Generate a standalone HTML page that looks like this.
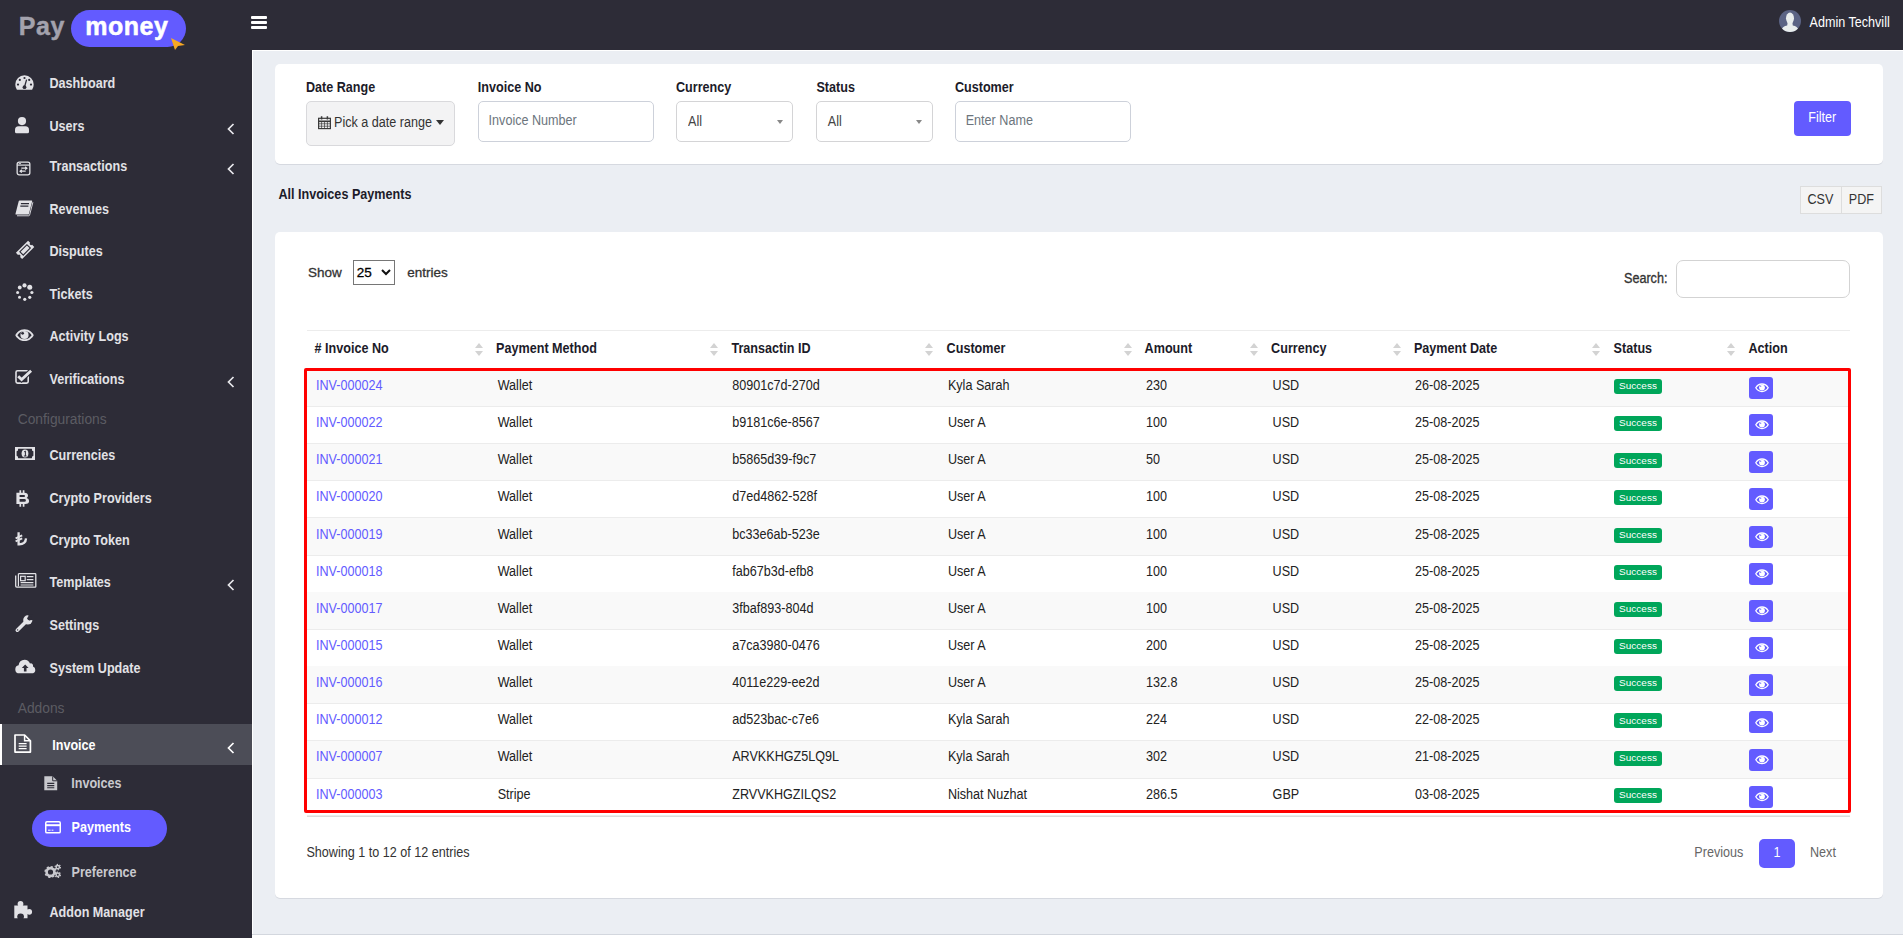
<!DOCTYPE html>
<html><head><meta charset="utf-8"><title>Payments</title>
<style>
html,body{margin:0;padding:0;}
body{width:1903px;height:938px;overflow:hidden;position:relative;background:#fff;font-family:"Liberation Sans",sans-serif;}
.t{position:absolute;white-space:nowrap;line-height:20px;}
.r{position:absolute;}
</style></head><body>
<div class="r" style="left:0px;top:0px;width:1903px;height:50px;background:#2d2c37"></div>
<div class="r" style="left:0px;top:50px;width:252px;height:888px;background:#2d2c37"></div>
<div class="r" style="left:252px;top:50px;width:1651px;height:885px;background:#ebeef3;border-left:1px solid #fff;border-top:1px solid #fff;box-sizing:border-box"></div>
<div class="r" style="left:252px;top:934px;width:1651px;height:1px;background:#d3d7de"></div>
<div class="r" style="left:252px;top:935px;width:1651px;height:3px;background:#fff"></div>
<div class="t" style="left:18.80px;top:15.80px;font-size:25px;font-weight:700;color:#a3a2ad;letter-spacing:0.5px;-webkit-text-stroke:0.4px #a3a2ad">Pay</div>
<div class="r" style="left:71px;top:10px;width:115px;height:37px;background:#635bff;border-radius:18.5px"></div>
<div class="t" style="left:85.30px;top:16.20px;font-size:25px;font-weight:700;color:#fff;letter-spacing:0.5px;-webkit-text-stroke:0.5px #fff">money</div>
<svg class="r" style="left:170px;top:37px;overflow:visible" width="16" height="13" viewBox="0 0 16 13"><path d="M1 1 L15 8 L8 9 L5 13 Z" fill="#f7a823"/></svg>
<div class="r" style="left:251px;top:16px;width:16px;height:3px;background:#fff;border-radius:1px"></div>
<div class="r" style="left:251px;top:21px;width:16px;height:3px;background:#fff;border-radius:1px"></div>
<div class="r" style="left:251px;top:26px;width:16px;height:3px;background:#fff;border-radius:1px"></div>
<svg class="r" style="left:1779px;top:10px;overflow:visible" width="22" height="22" viewBox="0 0 22 22"><circle cx="11" cy="11" r="11" fill="#5b6384"/><clipPath id="cc"><circle cx="11" cy="11" r="11"/></clipPath><g clip-path="url(#cc)" fill="#e9eded"><ellipse cx="11" cy="8.2" rx="4" ry="5.6"/><path d="M8.6 12.5 L13.4 12.5 L13.8 15.6 Q18.5 16.5 19.5 20 L19.5 23 L2.5 23 L2.5 20 Q3.5 16.5 8.2 15.6 Z"/></g></svg>
<div class="t" style="left:1809.50px;top:12.70px;font-size:12.6px;font-weight:400;color:#fff;transform:scaleY(1.1);transform-origin:0 14.00px;">Admin Techvill</div>
<div class="t" style="left:49.50px;top:74.00px;font-size:12.6px;font-weight:700;color:#e2e2e6;transform:scaleY(1.1);transform-origin:0 14.00px;">Dashboard</div>
<svg class="r" style="left:15px;top:74.5px;overflow:visible" width="19" height="15" viewBox="0 0 19 15"><path d="M9.5 0.3 A9.2 9.2 0 0 0 0.3 9.5 Q0.3 12.6 1.9 14.8 L17.1 14.8 Q18.7 12.6 18.7 9.5 A9.2 9.2 0 0 0 9.5 0.3 Z" fill="#e2e2e6"/>
<g fill="#2d2c37"><circle cx="9.5" cy="3" r="1.1"/><circle cx="4.8" cy="4.9" r="1.1"/><circle cx="14.2" cy="4.9" r="1.1"/><circle cx="3" cy="9.6" r="1.1"/><circle cx="16" cy="9.6" r="1.1"/><circle cx="9.5" cy="12.2" r="1.9"/></g>
<path d="M9.5 12 L11.6 4.6" stroke="#2d2c37" stroke-width="1.3"/></svg>
<div class="t" style="left:49.50px;top:117.00px;font-size:12.6px;font-weight:700;color:#e2e2e6;transform:scaleY(1.1);transform-origin:0 14.00px;">Users</div>
<svg class="r" style="left:15px;top:116.5px;overflow:visible" width="14" height="16.3" viewBox="0 0 14 16.3"><circle cx="7" cy="4.1" r="4.1" fill="#e2e2e6"/>
<path d="M3.6 9.3 L10.4 9.3 Q14 9.3 14 12.8 L14 14.8 Q14 16.3 12.5 16.3 L1.5 16.3 Q0 16.3 0 14.8 L0 12.8 Q0 9.3 3.6 9.3 Z" fill="#e2e2e6"/></svg>
<svg class="r" style="left:226px;top:123px;overflow:visible" width="10" height="12" viewBox="0 0 10 12"><path d="M7.5 1 L2.5 6 L7.5 11" stroke="#e8e8ec" stroke-width="1.7" fill="none"/></svg>
<div class="t" style="left:49.50px;top:157.00px;font-size:12.6px;font-weight:700;color:#e2e2e6;transform:scaleY(1.1);transform-origin:0 14.00px;">Transactions</div>
<svg class="r" style="left:15.5px;top:160.7px;overflow:visible" width="15" height="15" viewBox="0 0 15 15"><rect x="1.15" y="1.15" width="12.7" height="12.7" rx="2" fill="none" stroke="#e2e2e6" stroke-width="1.3"/>
<path d="M1.15 4.1 H13.85" stroke="#e2e2e6" stroke-width="1.2"/><path d="M2.8 2.6 H5" stroke="#e2e2e6" stroke-width="0.9"/>
<path d="M5.3 7.2 H10.8 M9.2 5.8 L10.9 7.2 L9.2 8.6" stroke="#e2e2e6" stroke-width="1.2" fill="none"/>
<path d="M9.7 10.2 H4.2 M5.8 8.8 L4.1 10.2 L5.8 11.6" stroke="#e2e2e6" stroke-width="1.2" fill="none"/></svg>
<svg class="r" style="left:226px;top:163px;overflow:visible" width="10" height="12" viewBox="0 0 10 12"><path d="M7.5 1 L2.5 6 L7.5 11" stroke="#e8e8ec" stroke-width="1.7" fill="none"/></svg>
<div class="t" style="left:49.50px;top:200.00px;font-size:12.6px;font-weight:700;color:#e2e2e6;transform:scaleY(1.1);transform-origin:0 14.00px;">Revenues</div>
<svg class="r" style="left:14.8px;top:199.5px;overflow:visible" width="18.5" height="16.2" viewBox="0 0 18.5 16.2"><path d="M4.6 0.4 L16.6 0.4 Q17.4 0.4 17.2 1.3 L13.9 13.9 Q13.7 14.6 13 14.6 L1.2 14.6 Q0.3 14.6 0.5 13.7 L3.7 1.2 Q3.9 0.4 4.6 0.4 Z" fill="#e2e2e6"/>
<path d="M17.9 2.2 L14.6 15.1 Q14.4 15.8 13.7 15.8 L2 15.8" stroke="#e2e2e6" stroke-width="0.9" fill="none"/>
<path d="M5.9 3.6 H14 M5.3 6.2 H13.4" stroke="#2d2c37" stroke-width="1.3"/></svg>
<div class="t" style="left:49.50px;top:242.00px;font-size:12.6px;font-weight:700;color:#e2e2e6;transform:scaleY(1.1);transform-origin:0 14.00px;">Disputes</div>
<svg class="r" style="left:15.5px;top:240.5px;overflow:visible" width="18.2" height="17.8" viewBox="0 0 18.2 17.8"><g transform="translate(9.1 8.9) rotate(-45)"><path d="M-8.6 -4.4 H8.6 V-1.4 A1.4 1.4 0 0 0 8.6 1.4 V4.4 H-8.6 V1.4 A1.4 1.4 0 0 0 -8.6 -1.4 Z" fill="#e2e2e6"/>
<rect x="-5" y="-2.4" width="10" height="4.8" fill="none" stroke="#2d2c37" stroke-width="1.1"/></g></svg>
<div class="t" style="left:49.50px;top:285.00px;font-size:12.6px;font-weight:700;color:#e2e2e6;transform:scaleY(1.1);transform-origin:0 14.00px;">Tickets</div>
<svg class="r" style="left:15.8px;top:283px;overflow:visible" width="18" height="18" viewBox="0 0 18 18"><g fill="#e2e2e6"><circle cx="8.5" cy="2.4" r="2.1"/><circle cx="13.75" cy="4.3" r="2.5"/><circle cx="15.9" cy="9.5" r="1.6"/><circle cx="13.75" cy="14.3" r="1.6"/><circle cx="8.75" cy="16.3" r="1.6"/><circle cx="3.5" cy="14.3" r="1.5"/><circle cx="1.6" cy="9.5" r="1.5"/><circle cx="3.75" cy="4.5" r="1.9"/></g></svg>
<div class="t" style="left:49.50px;top:327.00px;font-size:12.6px;font-weight:700;color:#e2e2e6;transform:scaleY(1.1);transform-origin:0 14.00px;">Activity Logs</div>
<svg class="r" style="left:15.2px;top:329.3px;overflow:visible" width="19" height="12.4" viewBox="0 0 19 12.4"><path d="M9.5 0.3 C4.6 0.3 1.4 3.9 0.3 6.2 C1.4 8.5 4.6 12.1 9.5 12.1 C14.4 12.1 17.6 8.5 18.7 6.2 C17.6 3.9 14.4 0.3 9.5 0.3 Z" fill="#e2e2e6"/>
<path d="M9.5 2.1 C5.9 2.1 3.5 4.6 2.4 6.2 C3.5 7.8 5.9 10.3 9.5 10.3 C13.1 10.3 15.5 7.8 16.6 6.2 C15.5 4.6 13.1 2.1 9.5 2.1 Z" fill="#2d2c37"/>
<circle cx="9.5" cy="6" r="4.1" fill="#e2e2e6"/><circle cx="7.6" cy="4.3" r="1.4" fill="#2d2c37"/></svg>
<div class="t" style="left:49.50px;top:370.00px;font-size:12.6px;font-weight:700;color:#e2e2e6;transform:scaleY(1.1);transform-origin:0 14.00px;">Verifications</div>
<svg class="r" style="left:15.2px;top:369.3px;overflow:visible" width="18" height="15" viewBox="0 0 18 15"><rect x="1.0" y="1.7" width="12.2" height="12.4" rx="1.6" fill="none" stroke="#e2e2e6" stroke-width="1.6"/>
<path d="M3.2 7.2 L6.6 10.6 L16.1 1.8" stroke="#2d2c37" stroke-width="4.8" fill="none"/>
<path d="M3.2 7.2 L6.6 10.6 L16.1 1.8" stroke="#e2e2e6" stroke-width="2.8" fill="none"/></svg>
<svg class="r" style="left:226px;top:376px;overflow:visible" width="10" height="12" viewBox="0 0 10 12"><path d="M7.5 1 L2.5 6 L7.5 11" stroke="#e8e8ec" stroke-width="1.7" fill="none"/></svg>
<div class="t" style="left:49.50px;top:446.00px;font-size:12.6px;font-weight:700;color:#e2e2e6;transform:scaleY(1.1);transform-origin:0 14.00px;">Currencies</div>
<svg class="r" style="left:15.3px;top:447.2px;overflow:visible" width="20" height="13" viewBox="0 0 20 13"><rect x="0" y="0" width="20" height="13" fill="#e2e2e6"/>
<path d="M3.2 1.7 H16.8 Q16.8 4.3 18.4 4.3 V8.7 Q16.8 8.7 16.8 11.3 H3.2 Q3.2 8.7 1.6 8.7 V4.3 Q3.2 4.3 3.2 1.7 Z" fill="#2d2c37"/>
<ellipse cx="10" cy="6.5" rx="3.4" ry="3.9" fill="#e2e2e6"/><path d="M9.1 4.9 L10.4 4.1 V9 M8.9 9 H11.6" stroke="#2d2c37" stroke-width="1" fill="none"/></svg>
<div class="t" style="left:49.50px;top:489.00px;font-size:12.6px;font-weight:700;color:#e2e2e6;transform:scaleY(1.1);transform-origin:0 14.00px;">Crypto Providers</div>
<svg class="r" style="left:15.6px;top:489.5px;overflow:visible" width="13.5" height="17" viewBox="0 0 13.5 17"><path fill-rule="evenodd" d="M0.4 2.8 H8.4 Q12 2.8 12 5.7 Q12 7.3 10.6 8 Q13.1 8.7 13.1 11 Q13.1 14 9.3 14 H0.4 Z M3.6 5.1 H7.9 Q9.1 5.1 9.1 6 Q9.1 6.9 7.9 6.9 H3.6 Z M3.6 9.1 H8.4 Q9.9 9.1 9.9 10.4 Q9.9 11.7 8.4 11.7 H3.6 Z" fill="#e2e2e6"/>
<path d="M4.3 0.2 V3 M7.6 0.2 V3 M4.3 13.8 V16.8 M7.6 13.8 V16.8" stroke="#e2e2e6" stroke-width="1.7"/></svg>
<div class="t" style="left:49.50px;top:531.00px;font-size:12.6px;font-weight:700;color:#e2e2e6;transform:scaleY(1.1);transform-origin:0 14.00px;">Crypto Token</div>
<svg class="r" style="left:15px;top:532.3px;overflow:visible" width="12.5" height="13.6" viewBox="0 0 12.5 13.6"><path d="M3.6 0.3 V12.3 Q10.8 12.6 11 6.4" stroke="#e2e2e6" stroke-width="2.3" fill="none"/>
<path d="M0.6 6.4 L7.2 3.4 M0.6 9.3 L7.2 6.3" stroke="#e2e2e6" stroke-width="1.9"/></svg>
<div class="t" style="left:49.50px;top:573.00px;font-size:12.6px;font-weight:700;color:#e2e2e6;transform:scaleY(1.1);transform-origin:0 14.00px;">Templates</div>
<svg class="r" style="left:15.2px;top:573.4px;overflow:visible" width="21.5" height="14.8" viewBox="0 0 21.5 14.8"><path d="M3.4 0.7 H20.1 Q20.8 0.7 20.8 1.4 V13.4 Q20.8 14.1 20.1 14.1 H1.7 Q0.7 14.1 0.7 13.1 V2.6" stroke="#e2e2e6" stroke-width="1.3" fill="none"/>
<path d="M3.4 0.7 V13.3" stroke="#e2e2e6" stroke-width="1.2"/>
<rect x="5.6" y="3.3" width="4.6" height="4.4" fill="none" stroke="#e2e2e6" stroke-width="1.2"/>
<path d="M11.8 3.7 H18.4 M11.8 6.6 H18.4 M5.6 9.6 H18.4 M5.6 12 H18.4" stroke="#e2e2e6" stroke-width="1.2"/></svg>
<svg class="r" style="left:226px;top:579px;overflow:visible" width="10" height="12" viewBox="0 0 10 12"><path d="M7.5 1 L2.5 6 L7.5 11" stroke="#e8e8ec" stroke-width="1.7" fill="none"/></svg>
<div class="t" style="left:49.50px;top:616.00px;font-size:12.6px;font-weight:700;color:#e2e2e6;transform:scaleY(1.1);transform-origin:0 14.00px;">Settings</div>
<svg class="r" style="left:15.2px;top:615.1px;overflow:visible" width="18" height="17.5" viewBox="0 0 18 17.5"><path d="M2.3 15.2 L10.6 6.9" stroke="#e2e2e6" stroke-width="3.6" stroke-linecap="round"/>
<circle cx="12.8" cy="4.9" r="4.6" fill="#e2e2e6"/><path d="M13.5 0 L18 -0.5 L18 5 L14.2 5.2 Q12.6 3.2 13.5 0 Z" fill="#2d2c37"/>
<circle cx="14.4" cy="3.3" r="2.1" fill="#2d2c37"/><circle cx="2.6" cy="14.9" r="0.7" fill="#2d2c37"/></svg>
<div class="t" style="left:49.50px;top:659.00px;font-size:12.6px;font-weight:700;color:#e2e2e6;transform:scaleY(1.1);transform-origin:0 14.00px;">System Update</div>
<svg class="r" style="left:15.2px;top:658.6px;overflow:visible" width="20.5" height="14.5" viewBox="0 0 20.5 14.5"><path d="M4.6 14.3 Q0.3 14.3 0.3 10.4 Q0.3 6.9 3.6 6.3 Q4.2 1 9.6 0.7 Q13.6 0.7 15 4.5 Q16.4 3.9 17.4 5 Q18.3 5.9 18 7.4 Q20.3 8.3 20.3 10.9 Q20.3 14.3 16.4 14.3 Z" fill="#e2e2e6"/>
<path d="M10.2 5.6 L6.8 9 H8.9 V12.4 H11.5 V9 H13.6 Z" fill="#2d2c37"/></svg>
<div class="t" style="left:49.50px;top:903.00px;font-size:12.6px;font-weight:700;color:#e2e2e6;transform:scaleY(1.1);transform-origin:0 14.00px;">Addon Manager</div>
<svg class="r" style="left:14.3px;top:900.8px;overflow:visible" width="19" height="17.5" viewBox="0 0 19 17.5"><path d="M0.3 4.6 H4.3 Q3.6 3.9 3.6 2.9 A2.9 2.9 0 0 1 9.4 2.9 Q9.4 3.9 8.7 4.6 H13.5 V8.6 Q14.2 7.9 15.2 7.9 A2.9 2.9 0 0 1 15.2 13.7 Q14.2 13.7 13.5 13 V17.3 H9.4 Q10 16.7 10 15.8 A3.4 3.4 0 0 0 3.2 15.8 Q3.2 16.7 3.8 17.3 H0.3 Z" fill="#e2e2e6"/></svg>
<div class="t" style="left:17.70px;top:409.50px;font-size:13.8px;font-weight:400;color:#5c5c63;">Configurations</div>
<div class="t" style="left:17.70px;top:698.50px;font-size:13.8px;font-weight:400;color:#5c5c63;">Addons</div>
<div class="r" style="left:0px;top:724px;width:252px;height:41px;background:#4c4d57"></div>
<div class="r" style="left:0px;top:724px;width:2px;height:41px;background:#fff"></div>
<div class="t" style="left:52.20px;top:736.00px;font-size:12.6px;font-weight:700;color:#fff;transform:scaleY(1.1);transform-origin:0 14.00px;">Invoice</div>
<svg class="r" style="left:226px;top:742px;overflow:visible" width="10" height="12" viewBox="0 0 10 12"><path d="M7.5 1 L2.5 6 L7.5 11" stroke="#ffffff" stroke-width="1.7" fill="none"/></svg>
<div class="t" style="left:71.20px;top:774.00px;font-size:12.6px;font-weight:700;color:#c9c9ce;transform:scaleY(1.1);transform-origin:0 14.00px;">Invoices</div>
<div class="r" style="left:32px;top:810px;width:135px;height:37px;background:#635bff;border-radius:18.5px"></div>
<div class="t" style="left:71.50px;top:818.00px;font-size:12.6px;font-weight:700;color:#fff;transform:scaleY(1.1);transform-origin:0 14.00px;">Payments</div>
<div class="t" style="left:71.50px;top:862.50px;font-size:12.6px;font-weight:700;color:#c9c9ce;transform:scaleY(1.1);transform-origin:0 14.00px;">Preference</div>
<svg class="r" style="left:14.3px;top:734.2px;overflow:visible" width="17.5" height="19" viewBox="0 0 17.5 19"><path d="M1 1 H10.6 L16.4 6.8 V17.9 Q16.4 18.1 16.2 18.1 H1.2 Q1 18.1 1 17.9 Z" stroke="#fff" stroke-width="1.7" fill="none" stroke-linejoin="round"/>
<path d="M10.6 1 V6.8 H16.4" stroke="#fff" stroke-width="1.5" fill="none"/>
<path d="M4.7 9.6 H12.6 M4.7 12.1 H12.6 M4.7 14.6 H12.6" stroke="#fff" stroke-width="1.4"/></svg>
<svg class="r" style="left:44.3px;top:775.8px;overflow:visible" width="13.5" height="14.5" viewBox="0 0 13.5 14.5"><path d="M0.3 0.3 H8.7 L13.2 4.8 V14.2 H0.3 Z" fill="#c9c9ce"/>
<path d="M8.7 0.3 V4.8 H13.2" stroke="#2d2c37" stroke-width="1" fill="none"/>
<path d="M3.2 7.4 H10.3 M3.2 9.6 H10.3 M3.2 11.8 H10.3" stroke="#2d2c37" stroke-width="1.1"/></svg>
<svg class="r" style="left:44.8px;top:820.7px;overflow:visible" width="16" height="12.6" viewBox="0 0 16 12.6"><rect x="0.75" y="0.75" width="14.5" height="11.1" rx="1.2" fill="none" stroke="#fff" stroke-width="1.5"/>
<path d="M0.75 4.2 H15.25" stroke="#fff" stroke-width="2"/>
<path d="M3 9.2 H5.6 M6.6 9.2 H8.4" stroke="#fff" stroke-width="1"/></svg>
<svg class="r" style="left:44.8px;top:864.4px;overflow:visible" width="16" height="13.8" viewBox="0 0 16 13.8"><g fill="none" stroke="#c9c9ce"><circle cx="5.5" cy="8" r="3.9" stroke-width="2.6"/><circle cx="5.5" cy="8" r="5.3" stroke-width="1.6" stroke-dasharray="2.2 1.9"/>
<circle cx="12.8" cy="3.1" r="1.7" stroke-width="1.5"/><circle cx="12.8" cy="3.1" r="2.7" stroke-width="1.1" stroke-dasharray="1.4 1.4"/>
<circle cx="12.8" cy="10.8" r="1.7" stroke-width="1.5"/><circle cx="12.8" cy="10.8" r="2.7" stroke-width="1.1" stroke-dasharray="1.4 1.4"/></g></svg>
<div class="r" style="left:275px;top:64px;width:1608px;height:100px;background:#fff;border-radius:5px;box-shadow:0 1px 0 #d6d9e0"></div>
<div class="t" style="left:305.90px;top:78.00px;font-size:12.6px;font-weight:700;color:#1c1b29;transform:scaleY(1.1);transform-origin:0 14.00px;">Date Range</div>
<div class="t" style="left:477.80px;top:78.00px;font-size:12.6px;font-weight:700;color:#1c1b29;transform:scaleY(1.1);transform-origin:0 14.00px;">Invoice No</div>
<div class="t" style="left:676.00px;top:78.00px;font-size:12.6px;font-weight:700;color:#1c1b29;transform:scaleY(1.1);transform-origin:0 14.00px;">Currency</div>
<div class="t" style="left:816.40px;top:78.00px;font-size:12.6px;font-weight:700;color:#1c1b29;transform:scaleY(1.1);transform-origin:0 14.00px;">Status</div>
<div class="t" style="left:954.90px;top:78.00px;font-size:12.6px;font-weight:700;color:#1c1b29;transform:scaleY(1.1);transform-origin:0 14.00px;">Customer</div>
<div class="r" style="left:306px;top:101px;width:149px;height:45px;background:#f3f3f4;border:1px solid #d9d9dc;border-radius:5px;box-sizing:border-box"></div>
<div class="t" style="left:334.00px;top:112.80px;font-size:12.6px;font-weight:400;color:#333;transform:scaleY(1.1);transform-origin:0 14.00px;">Pick a date range</div>
<svg class="r" style="left:318.3px;top:115.8px;overflow:visible" width="13" height="13.2" viewBox="0 0 13 13.2"><g fill="none" stroke="#3a3a3a"><rect x="0.6" y="2.3" width="11.8" height="10.3" stroke-width="1.2"/><path d="M0.6 5.3 H12.4" stroke-width="1.6"/><path d="M3.6 0.3 V3.5 M9.4 0.3 V3.5" stroke-width="1.5"/><path d="M0.6 7.8 H12.4 M0.6 10.2 H12.4 M3.55 5 V12.6 M6.5 5 V12.6 M9.45 5 V12.6" stroke-width="0.7"/></g></svg>
<svg class="r" style="left:435.5px;top:120.3px;overflow:visible" width="8" height="5" viewBox="0 0 8 5"><path d="M0 0 H8 L4 5 Z" fill="#333"/></svg>
<div class="r" style="left:478px;top:101px;width:176px;height:41px;background:#fff;border:1px solid #cdd1da;border-radius:5px;box-sizing:border-box"></div>
<div class="t" style="left:488.60px;top:111.00px;font-size:12.6px;font-weight:400;color:#6c757d;transform:scaleY(1.1);transform-origin:0 14.00px;">Invoice Number</div>
<div class="r" style="left:676px;top:101px;width:117px;height:41px;background:#fff;border:1px solid #d4d4d6;border-radius:5px;box-sizing:border-box"></div>
<div class="t" style="left:688.00px;top:112.00px;font-size:12.6px;font-weight:400;color:#444;transform:scaleY(1.1);transform-origin:0 14.00px;">All</div>
<svg class="r" style="left:777px;top:120px;overflow:visible" width="6" height="4" viewBox="0 0 6 4"><path d="M0 0 L6 0 L3 4 Z" fill="#888"/></svg>
<div class="r" style="left:816px;top:101px;width:117px;height:41px;background:#fff;border:1px solid #d4d4d6;border-radius:5px;box-sizing:border-box"></div>
<div class="t" style="left:827.80px;top:112.00px;font-size:12.6px;font-weight:400;color:#444;transform:scaleY(1.1);transform-origin:0 14.00px;">All</div>
<svg class="r" style="left:916px;top:120px;overflow:visible" width="6" height="4" viewBox="0 0 6 4"><path d="M0 0 L6 0 L3 4 Z" fill="#888"/></svg>
<div class="r" style="left:955px;top:101px;width:176px;height:41px;background:#fff;border:1px solid #cdd1da;border-radius:5px;box-sizing:border-box"></div>
<div class="t" style="left:965.70px;top:111.00px;font-size:12.6px;font-weight:400;color:#6c757d;transform:scaleY(1.1);transform-origin:0 14.00px;">Enter Name</div>
<div class="r" style="left:1794px;top:101px;width:57px;height:35px;background:#635bff;border-radius:4px"></div>
<div class="t" style="left:1808.20px;top:108.00px;font-size:12.6px;font-weight:400;color:#fff;transform:scaleY(1.1);transform-origin:0 14.00px;">Filter</div>
<div class="t" style="left:278.40px;top:185.00px;font-size:12.6px;font-weight:700;color:#1c1b29;transform:scaleY(1.1);transform-origin:0 14.00px;">All Invoices Payments</div>
<div class="r" style="left:1800px;top:186px;width:82px;height:28px;background:#f4f4f4;border:1px solid #ddd;box-sizing:border-box"></div>
<div class="r" style="left:1841px;top:186px;width:1px;height:28px;background:#ddd"></div>
<div class="t" style="left:1807.40px;top:190.00px;font-size:12.6px;font-weight:400;color:#333;transform:scaleY(1.1);transform-origin:0 14.00px;">CSV</div>
<div class="t" style="left:1848.80px;top:190.00px;font-size:12.6px;font-weight:400;color:#333;transform:scaleY(1.1);transform-origin:0 14.00px;">PDF</div>
<div class="r" style="left:275px;top:232px;width:1608px;height:666px;background:#fff;border-radius:5px;box-shadow:0 1px 0 #d6d9e0"></div>
<div class="t" style="left:307.90px;top:262.80px;font-size:13.5px;font-weight:400;color:#333;-webkit-text-stroke:0.3px #333">Show</div>
<div class="r" style="left:353px;top:260px;width:42px;height:25px;background:#fff;border:1px solid #767676;border-radius:0;box-sizing:border-box"></div>
<div class="t" style="left:356.80px;top:262.80px;font-size:13.5px;font-weight:400;color:#000;-webkit-text-stroke:0.3px #000">25</div>
<svg class="r" style="left:381px;top:269px;overflow:visible" width="10" height="7" viewBox="0 0 10 7"><path d="M1 1 L5 5 L9 1" stroke="#111" stroke-width="2" fill="none"/></svg>
<div class="t" style="left:407.30px;top:262.80px;font-size:13.5px;font-weight:400;color:#333;-webkit-text-stroke:0.3px #333">entries</div>
<div class="t" style="left:1624.00px;top:268.80px;font-size:12.6px;font-weight:400;color:#333;transform:scaleY(1.1);transform-origin:0 14.00px;-webkit-text-stroke:0.3px #333">Search:</div>
<div class="r" style="left:1676px;top:260px;width:174px;height:38px;background:#fff;border:1px solid #d3d3d3;border-radius:7px;box-sizing:border-box"></div>
<div class="r" style="left:307px;top:330px;width:1543px;height:1px;background:#ececec"></div>
<div class="t" style="left:314.50px;top:339.10px;font-size:12.6px;font-weight:700;color:#1c1b29;transform:scaleY(1.1);transform-origin:0 14.00px;"># Invoice No</div>
<div class="t" style="left:496.10px;top:339.10px;font-size:12.6px;font-weight:700;color:#1c1b29;transform:scaleY(1.1);transform-origin:0 14.00px;">Payment Method</div>
<div class="t" style="left:731.40px;top:339.10px;font-size:12.6px;font-weight:700;color:#1c1b29;transform:scaleY(1.1);transform-origin:0 14.00px;">Transactin ID</div>
<div class="t" style="left:946.60px;top:339.10px;font-size:12.6px;font-weight:700;color:#1c1b29;transform:scaleY(1.1);transform-origin:0 14.00px;">Customer</div>
<div class="t" style="left:1144.60px;top:339.10px;font-size:12.6px;font-weight:700;color:#1c1b29;transform:scaleY(1.1);transform-origin:0 14.00px;">Amount</div>
<div class="t" style="left:1271.10px;top:339.10px;font-size:12.6px;font-weight:700;color:#1c1b29;transform:scaleY(1.1);transform-origin:0 14.00px;">Currency</div>
<div class="t" style="left:1413.90px;top:339.10px;font-size:12.6px;font-weight:700;color:#1c1b29;transform:scaleY(1.1);transform-origin:0 14.00px;">Payment Date</div>
<div class="t" style="left:1613.60px;top:339.10px;font-size:12.6px;font-weight:700;color:#1c1b29;transform:scaleY(1.1);transform-origin:0 14.00px;">Status</div>
<div class="t" style="left:1748.40px;top:339.10px;font-size:12.6px;font-weight:700;color:#1c1b29;transform:scaleY(1.1);transform-origin:0 14.00px;">Action</div>
<svg class="r" style="left:475px;top:343px;overflow:visible" width="8" height="13" viewBox="0 0 8 13"><path d="M4 0 L8 5 L0 5 Z M0 8 L8 8 L4 13 Z" fill="#d3d3d3"/></svg>
<svg class="r" style="left:710px;top:343px;overflow:visible" width="8" height="13" viewBox="0 0 8 13"><path d="M4 0 L8 5 L0 5 Z M0 8 L8 8 L4 13 Z" fill="#d3d3d3"/></svg>
<svg class="r" style="left:925px;top:343px;overflow:visible" width="8" height="13" viewBox="0 0 8 13"><path d="M4 0 L8 5 L0 5 Z M0 8 L8 8 L4 13 Z" fill="#d3d3d3"/></svg>
<svg class="r" style="left:1124px;top:343px;overflow:visible" width="8" height="13" viewBox="0 0 8 13"><path d="M4 0 L8 5 L0 5 Z M0 8 L8 8 L4 13 Z" fill="#d3d3d3"/></svg>
<svg class="r" style="left:1250px;top:343px;overflow:visible" width="8" height="13" viewBox="0 0 8 13"><path d="M4 0 L8 5 L0 5 Z M0 8 L8 8 L4 13 Z" fill="#d3d3d3"/></svg>
<svg class="r" style="left:1393px;top:343px;overflow:visible" width="8" height="13" viewBox="0 0 8 13"><path d="M4 0 L8 5 L0 5 Z M0 8 L8 8 L4 13 Z" fill="#d3d3d3"/></svg>
<svg class="r" style="left:1592px;top:343px;overflow:visible" width="8" height="13" viewBox="0 0 8 13"><path d="M4 0 L8 5 L0 5 Z M0 8 L8 8 L4 13 Z" fill="#d3d3d3"/></svg>
<svg class="r" style="left:1727px;top:343px;overflow:visible" width="8" height="13" viewBox="0 0 8 13"><path d="M4 0 L8 5 L0 5 Z M0 8 L8 8 L4 13 Z" fill="#d3d3d3"/></svg>
<div class="r" style="left:307px;top:370px;width:1543px;height:1px;background:#ddd"></div>
<div class="r" style="left:307px;top:369.25px;width:1543px;height:37.15px;background:#f9f9f9"></div>
<div class="r" style="left:307px;top:406.0px;width:1543px;height:1px;background:#ececec"></div>
<div class="t" style="left:316.00px;top:375.90px;font-size:12.6px;font-weight:400;color:#635bff;transform:scaleY(1.1);transform-origin:0 14.00px;">INV-000024</div>
<div class="t" style="left:497.70px;top:375.90px;font-size:12.6px;font-weight:400;color:#222;transform:scaleY(1.1);transform-origin:0 14.00px;">Wallet</div>
<div class="t" style="left:732.20px;top:375.90px;font-size:12.6px;font-weight:400;color:#222;transform:scaleY(1.1);transform-origin:0 14.00px;">80901c7d-270d</div>
<div class="t" style="left:947.90px;top:375.90px;font-size:12.6px;font-weight:400;color:#222;transform:scaleY(1.1);transform-origin:0 14.00px;">Kyla Sarah</div>
<div class="t" style="left:1145.90px;top:375.90px;font-size:12.6px;font-weight:400;color:#222;transform:scaleY(1.1);transform-origin:0 14.00px;">230</div>
<div class="t" style="left:1272.60px;top:375.90px;font-size:12.6px;font-weight:400;color:#222;transform:scaleY(1.1);transform-origin:0 14.00px;">USD</div>
<div class="t" style="left:1415.00px;top:375.90px;font-size:12.6px;font-weight:400;color:#222;transform:scaleY(1.1);transform-origin:0 14.00px;">26-08-2025</div>
<div class="r" style="left:1614px;top:379.0px;width:48px;height:15px;background:#00a65a;border-radius:3px"></div>
<div class="t" style="left:1614px;top:378.25px;width:48px;height:15px;line-height:15px;text-align:center;font-size:10px;color:#fff;transform:scaleY(0.92)">Success</div>
<div class="r" style="left:1749px;top:377.0px;width:24px;height:22px;background:#635bff;border-radius:3px"></div>
<svg class="r" style="left:1754.6px;top:383.2px;overflow:visible" width="14" height="9.6" viewBox="0 0 14 9.6"><path d="M7 1 C3.8 1 1.6 3.4 0.8 4.8 C1.6 6.2 3.8 8.6 7 8.6 C10.2 8.6 12.4 6.2 13.2 4.8 C12.4 3.4 10.2 1 7 1 Z" fill="none" stroke="#fff" stroke-width="1.3"/><circle cx="7" cy="4.6" r="2.9" fill="#fff"/><circle cx="5.6" cy="3.2" r="0.8" fill="#8f89ff"/></svg>
<div class="r" style="left:307px;top:443.15px;width:1543px;height:1px;background:#ececec"></div>
<div class="t" style="left:316.00px;top:413.05px;font-size:12.6px;font-weight:400;color:#635bff;transform:scaleY(1.1);transform-origin:0 14.00px;">INV-000022</div>
<div class="t" style="left:497.70px;top:413.05px;font-size:12.6px;font-weight:400;color:#222;transform:scaleY(1.1);transform-origin:0 14.00px;">Wallet</div>
<div class="t" style="left:732.20px;top:413.05px;font-size:12.6px;font-weight:400;color:#222;transform:scaleY(1.1);transform-origin:0 14.00px;">b9181c6e-8567</div>
<div class="t" style="left:947.90px;top:413.05px;font-size:12.6px;font-weight:400;color:#222;transform:scaleY(1.1);transform-origin:0 14.00px;">User A</div>
<div class="t" style="left:1145.90px;top:413.05px;font-size:12.6px;font-weight:400;color:#222;transform:scaleY(1.1);transform-origin:0 14.00px;">100</div>
<div class="t" style="left:1272.60px;top:413.05px;font-size:12.6px;font-weight:400;color:#222;transform:scaleY(1.1);transform-origin:0 14.00px;">USD</div>
<div class="t" style="left:1415.00px;top:413.05px;font-size:12.6px;font-weight:400;color:#222;transform:scaleY(1.1);transform-origin:0 14.00px;">25-08-2025</div>
<div class="r" style="left:1614px;top:416.15px;width:48px;height:15px;background:#00a65a;border-radius:3px"></div>
<div class="t" style="left:1614px;top:415.40px;width:48px;height:15px;line-height:15px;text-align:center;font-size:10px;color:#fff;transform:scaleY(0.92)">Success</div>
<div class="r" style="left:1749px;top:414.15px;width:24px;height:22px;background:#635bff;border-radius:3px"></div>
<svg class="r" style="left:1754.6px;top:420.35px;overflow:visible" width="14" height="9.6" viewBox="0 0 14 9.6"><path d="M7 1 C3.8 1 1.6 3.4 0.8 4.8 C1.6 6.2 3.8 8.6 7 8.6 C10.2 8.6 12.4 6.2 13.2 4.8 C12.4 3.4 10.2 1 7 1 Z" fill="none" stroke="#fff" stroke-width="1.3"/><circle cx="7" cy="4.6" r="2.9" fill="#fff"/><circle cx="5.6" cy="3.2" r="0.8" fill="#8f89ff"/></svg>
<div class="r" style="left:307px;top:443.55px;width:1543px;height:37.15px;background:#f9f9f9"></div>
<div class="r" style="left:307px;top:480.3px;width:1543px;height:1px;background:#ececec"></div>
<div class="t" style="left:316.00px;top:450.20px;font-size:12.6px;font-weight:400;color:#635bff;transform:scaleY(1.1);transform-origin:0 14.00px;">INV-000021</div>
<div class="t" style="left:497.70px;top:450.20px;font-size:12.6px;font-weight:400;color:#222;transform:scaleY(1.1);transform-origin:0 14.00px;">Wallet</div>
<div class="t" style="left:732.20px;top:450.20px;font-size:12.6px;font-weight:400;color:#222;transform:scaleY(1.1);transform-origin:0 14.00px;">b5865d39-f9c7</div>
<div class="t" style="left:947.90px;top:450.20px;font-size:12.6px;font-weight:400;color:#222;transform:scaleY(1.1);transform-origin:0 14.00px;">User A</div>
<div class="t" style="left:1145.90px;top:450.20px;font-size:12.6px;font-weight:400;color:#222;transform:scaleY(1.1);transform-origin:0 14.00px;">50</div>
<div class="t" style="left:1272.60px;top:450.20px;font-size:12.6px;font-weight:400;color:#222;transform:scaleY(1.1);transform-origin:0 14.00px;">USD</div>
<div class="t" style="left:1415.00px;top:450.20px;font-size:12.6px;font-weight:400;color:#222;transform:scaleY(1.1);transform-origin:0 14.00px;">25-08-2025</div>
<div class="r" style="left:1614px;top:453.3px;width:48px;height:15px;background:#00a65a;border-radius:3px"></div>
<div class="t" style="left:1614px;top:452.55px;width:48px;height:15px;line-height:15px;text-align:center;font-size:10px;color:#fff;transform:scaleY(0.92)">Success</div>
<div class="r" style="left:1749px;top:451.3px;width:24px;height:22px;background:#635bff;border-radius:3px"></div>
<svg class="r" style="left:1754.6px;top:457.5px;overflow:visible" width="14" height="9.6" viewBox="0 0 14 9.6"><path d="M7 1 C3.8 1 1.6 3.4 0.8 4.8 C1.6 6.2 3.8 8.6 7 8.6 C10.2 8.6 12.4 6.2 13.2 4.8 C12.4 3.4 10.2 1 7 1 Z" fill="none" stroke="#fff" stroke-width="1.3"/><circle cx="7" cy="4.6" r="2.9" fill="#fff"/><circle cx="5.6" cy="3.2" r="0.8" fill="#8f89ff"/></svg>
<div class="r" style="left:307px;top:517.45px;width:1543px;height:1px;background:#ececec"></div>
<div class="t" style="left:316.00px;top:487.35px;font-size:12.6px;font-weight:400;color:#635bff;transform:scaleY(1.1);transform-origin:0 14.00px;">INV-000020</div>
<div class="t" style="left:497.70px;top:487.35px;font-size:12.6px;font-weight:400;color:#222;transform:scaleY(1.1);transform-origin:0 14.00px;">Wallet</div>
<div class="t" style="left:732.20px;top:487.35px;font-size:12.6px;font-weight:400;color:#222;transform:scaleY(1.1);transform-origin:0 14.00px;">d7ed4862-528f</div>
<div class="t" style="left:947.90px;top:487.35px;font-size:12.6px;font-weight:400;color:#222;transform:scaleY(1.1);transform-origin:0 14.00px;">User A</div>
<div class="t" style="left:1145.90px;top:487.35px;font-size:12.6px;font-weight:400;color:#222;transform:scaleY(1.1);transform-origin:0 14.00px;">100</div>
<div class="t" style="left:1272.60px;top:487.35px;font-size:12.6px;font-weight:400;color:#222;transform:scaleY(1.1);transform-origin:0 14.00px;">USD</div>
<div class="t" style="left:1415.00px;top:487.35px;font-size:12.6px;font-weight:400;color:#222;transform:scaleY(1.1);transform-origin:0 14.00px;">25-08-2025</div>
<div class="r" style="left:1614px;top:490.45px;width:48px;height:15px;background:#00a65a;border-radius:3px"></div>
<div class="t" style="left:1614px;top:489.70px;width:48px;height:15px;line-height:15px;text-align:center;font-size:10px;color:#fff;transform:scaleY(0.92)">Success</div>
<div class="r" style="left:1749px;top:488.45px;width:24px;height:22px;background:#635bff;border-radius:3px"></div>
<svg class="r" style="left:1754.6px;top:494.65px;overflow:visible" width="14" height="9.6" viewBox="0 0 14 9.6"><path d="M7 1 C3.8 1 1.6 3.4 0.8 4.8 C1.6 6.2 3.8 8.6 7 8.6 C10.2 8.6 12.4 6.2 13.2 4.8 C12.4 3.4 10.2 1 7 1 Z" fill="none" stroke="#fff" stroke-width="1.3"/><circle cx="7" cy="4.6" r="2.9" fill="#fff"/><circle cx="5.6" cy="3.2" r="0.8" fill="#8f89ff"/></svg>
<div class="r" style="left:307px;top:517.85px;width:1543px;height:37.15px;background:#f9f9f9"></div>
<div class="r" style="left:307px;top:554.6px;width:1543px;height:1px;background:#ececec"></div>
<div class="t" style="left:316.00px;top:524.50px;font-size:12.6px;font-weight:400;color:#635bff;transform:scaleY(1.1);transform-origin:0 14.00px;">INV-000019</div>
<div class="t" style="left:497.70px;top:524.50px;font-size:12.6px;font-weight:400;color:#222;transform:scaleY(1.1);transform-origin:0 14.00px;">Wallet</div>
<div class="t" style="left:732.20px;top:524.50px;font-size:12.6px;font-weight:400;color:#222;transform:scaleY(1.1);transform-origin:0 14.00px;">bc33e6ab-523e</div>
<div class="t" style="left:947.90px;top:524.50px;font-size:12.6px;font-weight:400;color:#222;transform:scaleY(1.1);transform-origin:0 14.00px;">User A</div>
<div class="t" style="left:1145.90px;top:524.50px;font-size:12.6px;font-weight:400;color:#222;transform:scaleY(1.1);transform-origin:0 14.00px;">100</div>
<div class="t" style="left:1272.60px;top:524.50px;font-size:12.6px;font-weight:400;color:#222;transform:scaleY(1.1);transform-origin:0 14.00px;">USD</div>
<div class="t" style="left:1415.00px;top:524.50px;font-size:12.6px;font-weight:400;color:#222;transform:scaleY(1.1);transform-origin:0 14.00px;">25-08-2025</div>
<div class="r" style="left:1614px;top:527.6px;width:48px;height:15px;background:#00a65a;border-radius:3px"></div>
<div class="t" style="left:1614px;top:526.85px;width:48px;height:15px;line-height:15px;text-align:center;font-size:10px;color:#fff;transform:scaleY(0.92)">Success</div>
<div class="r" style="left:1749px;top:525.6px;width:24px;height:22px;background:#635bff;border-radius:3px"></div>
<svg class="r" style="left:1754.6px;top:531.8px;overflow:visible" width="14" height="9.6" viewBox="0 0 14 9.6"><path d="M7 1 C3.8 1 1.6 3.4 0.8 4.8 C1.6 6.2 3.8 8.6 7 8.6 C10.2 8.6 12.4 6.2 13.2 4.8 C12.4 3.4 10.2 1 7 1 Z" fill="none" stroke="#fff" stroke-width="1.3"/><circle cx="7" cy="4.6" r="2.9" fill="#fff"/><circle cx="5.6" cy="3.2" r="0.8" fill="#8f89ff"/></svg>
<div class="r" style="left:307px;top:591.75px;width:1543px;height:1px;background:#ececec"></div>
<div class="t" style="left:316.00px;top:561.65px;font-size:12.6px;font-weight:400;color:#635bff;transform:scaleY(1.1);transform-origin:0 14.00px;">INV-000018</div>
<div class="t" style="left:497.70px;top:561.65px;font-size:12.6px;font-weight:400;color:#222;transform:scaleY(1.1);transform-origin:0 14.00px;">Wallet</div>
<div class="t" style="left:732.20px;top:561.65px;font-size:12.6px;font-weight:400;color:#222;transform:scaleY(1.1);transform-origin:0 14.00px;">fab67b3d-efb8</div>
<div class="t" style="left:947.90px;top:561.65px;font-size:12.6px;font-weight:400;color:#222;transform:scaleY(1.1);transform-origin:0 14.00px;">User A</div>
<div class="t" style="left:1145.90px;top:561.65px;font-size:12.6px;font-weight:400;color:#222;transform:scaleY(1.1);transform-origin:0 14.00px;">100</div>
<div class="t" style="left:1272.60px;top:561.65px;font-size:12.6px;font-weight:400;color:#222;transform:scaleY(1.1);transform-origin:0 14.00px;">USD</div>
<div class="t" style="left:1415.00px;top:561.65px;font-size:12.6px;font-weight:400;color:#222;transform:scaleY(1.1);transform-origin:0 14.00px;">25-08-2025</div>
<div class="r" style="left:1614px;top:564.75px;width:48px;height:15px;background:#00a65a;border-radius:3px"></div>
<div class="t" style="left:1614px;top:564.00px;width:48px;height:15px;line-height:15px;text-align:center;font-size:10px;color:#fff;transform:scaleY(0.92)">Success</div>
<div class="r" style="left:1749px;top:562.75px;width:24px;height:22px;background:#635bff;border-radius:3px"></div>
<svg class="r" style="left:1754.6px;top:568.95px;overflow:visible" width="14" height="9.6" viewBox="0 0 14 9.6"><path d="M7 1 C3.8 1 1.6 3.4 0.8 4.8 C1.6 6.2 3.8 8.6 7 8.6 C10.2 8.6 12.4 6.2 13.2 4.8 C12.4 3.4 10.2 1 7 1 Z" fill="none" stroke="#fff" stroke-width="1.3"/><circle cx="7" cy="4.6" r="2.9" fill="#fff"/><circle cx="5.6" cy="3.2" r="0.8" fill="#8f89ff"/></svg>
<div class="r" style="left:307px;top:592.15px;width:1543px;height:37.15px;background:#f9f9f9"></div>
<div class="r" style="left:307px;top:628.9px;width:1543px;height:1px;background:#ececec"></div>
<div class="t" style="left:316.00px;top:598.80px;font-size:12.6px;font-weight:400;color:#635bff;transform:scaleY(1.1);transform-origin:0 14.00px;">INV-000017</div>
<div class="t" style="left:497.70px;top:598.80px;font-size:12.6px;font-weight:400;color:#222;transform:scaleY(1.1);transform-origin:0 14.00px;">Wallet</div>
<div class="t" style="left:732.20px;top:598.80px;font-size:12.6px;font-weight:400;color:#222;transform:scaleY(1.1);transform-origin:0 14.00px;">3fbaf893-804d</div>
<div class="t" style="left:947.90px;top:598.80px;font-size:12.6px;font-weight:400;color:#222;transform:scaleY(1.1);transform-origin:0 14.00px;">User A</div>
<div class="t" style="left:1145.90px;top:598.80px;font-size:12.6px;font-weight:400;color:#222;transform:scaleY(1.1);transform-origin:0 14.00px;">100</div>
<div class="t" style="left:1272.60px;top:598.80px;font-size:12.6px;font-weight:400;color:#222;transform:scaleY(1.1);transform-origin:0 14.00px;">USD</div>
<div class="t" style="left:1415.00px;top:598.80px;font-size:12.6px;font-weight:400;color:#222;transform:scaleY(1.1);transform-origin:0 14.00px;">25-08-2025</div>
<div class="r" style="left:1614px;top:601.9px;width:48px;height:15px;background:#00a65a;border-radius:3px"></div>
<div class="t" style="left:1614px;top:601.15px;width:48px;height:15px;line-height:15px;text-align:center;font-size:10px;color:#fff;transform:scaleY(0.92)">Success</div>
<div class="r" style="left:1749px;top:599.9px;width:24px;height:22px;background:#635bff;border-radius:3px"></div>
<svg class="r" style="left:1754.6px;top:606.1px;overflow:visible" width="14" height="9.6" viewBox="0 0 14 9.6"><path d="M7 1 C3.8 1 1.6 3.4 0.8 4.8 C1.6 6.2 3.8 8.6 7 8.6 C10.2 8.6 12.4 6.2 13.2 4.8 C12.4 3.4 10.2 1 7 1 Z" fill="none" stroke="#fff" stroke-width="1.3"/><circle cx="7" cy="4.6" r="2.9" fill="#fff"/><circle cx="5.6" cy="3.2" r="0.8" fill="#8f89ff"/></svg>
<div class="r" style="left:307px;top:666.05px;width:1543px;height:1px;background:#ececec"></div>
<div class="t" style="left:316.00px;top:635.95px;font-size:12.6px;font-weight:400;color:#635bff;transform:scaleY(1.1);transform-origin:0 14.00px;">INV-000015</div>
<div class="t" style="left:497.70px;top:635.95px;font-size:12.6px;font-weight:400;color:#222;transform:scaleY(1.1);transform-origin:0 14.00px;">Wallet</div>
<div class="t" style="left:732.20px;top:635.95px;font-size:12.6px;font-weight:400;color:#222;transform:scaleY(1.1);transform-origin:0 14.00px;">a7ca3980-0476</div>
<div class="t" style="left:947.90px;top:635.95px;font-size:12.6px;font-weight:400;color:#222;transform:scaleY(1.1);transform-origin:0 14.00px;">User A</div>
<div class="t" style="left:1145.90px;top:635.95px;font-size:12.6px;font-weight:400;color:#222;transform:scaleY(1.1);transform-origin:0 14.00px;">200</div>
<div class="t" style="left:1272.60px;top:635.95px;font-size:12.6px;font-weight:400;color:#222;transform:scaleY(1.1);transform-origin:0 14.00px;">USD</div>
<div class="t" style="left:1415.00px;top:635.95px;font-size:12.6px;font-weight:400;color:#222;transform:scaleY(1.1);transform-origin:0 14.00px;">25-08-2025</div>
<div class="r" style="left:1614px;top:639.05px;width:48px;height:15px;background:#00a65a;border-radius:3px"></div>
<div class="t" style="left:1614px;top:638.30px;width:48px;height:15px;line-height:15px;text-align:center;font-size:10px;color:#fff;transform:scaleY(0.92)">Success</div>
<div class="r" style="left:1749px;top:637.05px;width:24px;height:22px;background:#635bff;border-radius:3px"></div>
<svg class="r" style="left:1754.6px;top:643.25px;overflow:visible" width="14" height="9.6" viewBox="0 0 14 9.6"><path d="M7 1 C3.8 1 1.6 3.4 0.8 4.8 C1.6 6.2 3.8 8.6 7 8.6 C10.2 8.6 12.4 6.2 13.2 4.8 C12.4 3.4 10.2 1 7 1 Z" fill="none" stroke="#fff" stroke-width="1.3"/><circle cx="7" cy="4.6" r="2.9" fill="#fff"/><circle cx="5.6" cy="3.2" r="0.8" fill="#8f89ff"/></svg>
<div class="r" style="left:307px;top:666.45px;width:1543px;height:37.15px;background:#f9f9f9"></div>
<div class="r" style="left:307px;top:703.2px;width:1543px;height:1px;background:#ececec"></div>
<div class="t" style="left:316.00px;top:673.10px;font-size:12.6px;font-weight:400;color:#635bff;transform:scaleY(1.1);transform-origin:0 14.00px;">INV-000016</div>
<div class="t" style="left:497.70px;top:673.10px;font-size:12.6px;font-weight:400;color:#222;transform:scaleY(1.1);transform-origin:0 14.00px;">Wallet</div>
<div class="t" style="left:732.20px;top:673.10px;font-size:12.6px;font-weight:400;color:#222;transform:scaleY(1.1);transform-origin:0 14.00px;">4011e229-ee2d</div>
<div class="t" style="left:947.90px;top:673.10px;font-size:12.6px;font-weight:400;color:#222;transform:scaleY(1.1);transform-origin:0 14.00px;">User A</div>
<div class="t" style="left:1145.90px;top:673.10px;font-size:12.6px;font-weight:400;color:#222;transform:scaleY(1.1);transform-origin:0 14.00px;">132.8</div>
<div class="t" style="left:1272.60px;top:673.10px;font-size:12.6px;font-weight:400;color:#222;transform:scaleY(1.1);transform-origin:0 14.00px;">USD</div>
<div class="t" style="left:1415.00px;top:673.10px;font-size:12.6px;font-weight:400;color:#222;transform:scaleY(1.1);transform-origin:0 14.00px;">25-08-2025</div>
<div class="r" style="left:1614px;top:676.2px;width:48px;height:15px;background:#00a65a;border-radius:3px"></div>
<div class="t" style="left:1614px;top:675.45px;width:48px;height:15px;line-height:15px;text-align:center;font-size:10px;color:#fff;transform:scaleY(0.92)">Success</div>
<div class="r" style="left:1749px;top:674.2px;width:24px;height:22px;background:#635bff;border-radius:3px"></div>
<svg class="r" style="left:1754.6px;top:680.4px;overflow:visible" width="14" height="9.6" viewBox="0 0 14 9.6"><path d="M7 1 C3.8 1 1.6 3.4 0.8 4.8 C1.6 6.2 3.8 8.6 7 8.6 C10.2 8.6 12.4 6.2 13.2 4.8 C12.4 3.4 10.2 1 7 1 Z" fill="none" stroke="#fff" stroke-width="1.3"/><circle cx="7" cy="4.6" r="2.9" fill="#fff"/><circle cx="5.6" cy="3.2" r="0.8" fill="#8f89ff"/></svg>
<div class="r" style="left:307px;top:740.35px;width:1543px;height:1px;background:#ececec"></div>
<div class="t" style="left:316.00px;top:710.25px;font-size:12.6px;font-weight:400;color:#635bff;transform:scaleY(1.1);transform-origin:0 14.00px;">INV-000012</div>
<div class="t" style="left:497.70px;top:710.25px;font-size:12.6px;font-weight:400;color:#222;transform:scaleY(1.1);transform-origin:0 14.00px;">Wallet</div>
<div class="t" style="left:732.20px;top:710.25px;font-size:12.6px;font-weight:400;color:#222;transform:scaleY(1.1);transform-origin:0 14.00px;">ad523bac-c7e6</div>
<div class="t" style="left:947.90px;top:710.25px;font-size:12.6px;font-weight:400;color:#222;transform:scaleY(1.1);transform-origin:0 14.00px;">Kyla Sarah</div>
<div class="t" style="left:1145.90px;top:710.25px;font-size:12.6px;font-weight:400;color:#222;transform:scaleY(1.1);transform-origin:0 14.00px;">224</div>
<div class="t" style="left:1272.60px;top:710.25px;font-size:12.6px;font-weight:400;color:#222;transform:scaleY(1.1);transform-origin:0 14.00px;">USD</div>
<div class="t" style="left:1415.00px;top:710.25px;font-size:12.6px;font-weight:400;color:#222;transform:scaleY(1.1);transform-origin:0 14.00px;">22-08-2025</div>
<div class="r" style="left:1614px;top:713.35px;width:48px;height:15px;background:#00a65a;border-radius:3px"></div>
<div class="t" style="left:1614px;top:712.60px;width:48px;height:15px;line-height:15px;text-align:center;font-size:10px;color:#fff;transform:scaleY(0.92)">Success</div>
<div class="r" style="left:1749px;top:711.35px;width:24px;height:22px;background:#635bff;border-radius:3px"></div>
<svg class="r" style="left:1754.6px;top:717.55px;overflow:visible" width="14" height="9.6" viewBox="0 0 14 9.6"><path d="M7 1 C3.8 1 1.6 3.4 0.8 4.8 C1.6 6.2 3.8 8.6 7 8.6 C10.2 8.6 12.4 6.2 13.2 4.8 C12.4 3.4 10.2 1 7 1 Z" fill="none" stroke="#fff" stroke-width="1.3"/><circle cx="7" cy="4.6" r="2.9" fill="#fff"/><circle cx="5.6" cy="3.2" r="0.8" fill="#8f89ff"/></svg>
<div class="r" style="left:307px;top:740.75px;width:1543px;height:37.15px;background:#f9f9f9"></div>
<div class="r" style="left:307px;top:777.5px;width:1543px;height:1px;background:#ececec"></div>
<div class="t" style="left:316.00px;top:747.40px;font-size:12.6px;font-weight:400;color:#635bff;transform:scaleY(1.1);transform-origin:0 14.00px;">INV-000007</div>
<div class="t" style="left:497.70px;top:747.40px;font-size:12.6px;font-weight:400;color:#222;transform:scaleY(1.1);transform-origin:0 14.00px;">Wallet</div>
<div class="t" style="left:732.20px;top:747.40px;font-size:12.6px;font-weight:400;color:#222;transform:scaleY(1.1);transform-origin:0 14.00px;">ARVKKHGZ5LQ9L</div>
<div class="t" style="left:947.90px;top:747.40px;font-size:12.6px;font-weight:400;color:#222;transform:scaleY(1.1);transform-origin:0 14.00px;">Kyla Sarah</div>
<div class="t" style="left:1145.90px;top:747.40px;font-size:12.6px;font-weight:400;color:#222;transform:scaleY(1.1);transform-origin:0 14.00px;">302</div>
<div class="t" style="left:1272.60px;top:747.40px;font-size:12.6px;font-weight:400;color:#222;transform:scaleY(1.1);transform-origin:0 14.00px;">USD</div>
<div class="t" style="left:1415.00px;top:747.40px;font-size:12.6px;font-weight:400;color:#222;transform:scaleY(1.1);transform-origin:0 14.00px;">21-08-2025</div>
<div class="r" style="left:1614px;top:750.5px;width:48px;height:15px;background:#00a65a;border-radius:3px"></div>
<div class="t" style="left:1614px;top:749.75px;width:48px;height:15px;line-height:15px;text-align:center;font-size:10px;color:#fff;transform:scaleY(0.92)">Success</div>
<div class="r" style="left:1749px;top:748.5px;width:24px;height:22px;background:#635bff;border-radius:3px"></div>
<svg class="r" style="left:1754.6px;top:754.7px;overflow:visible" width="14" height="9.6" viewBox="0 0 14 9.6"><path d="M7 1 C3.8 1 1.6 3.4 0.8 4.8 C1.6 6.2 3.8 8.6 7 8.6 C10.2 8.6 12.4 6.2 13.2 4.8 C12.4 3.4 10.2 1 7 1 Z" fill="none" stroke="#fff" stroke-width="1.3"/><circle cx="7" cy="4.6" r="2.9" fill="#fff"/><circle cx="5.6" cy="3.2" r="0.8" fill="#8f89ff"/></svg>
<div class="r" style="left:307px;top:814.65px;width:1543px;height:1px;background:#ececec"></div>
<div class="t" style="left:316.00px;top:784.55px;font-size:12.6px;font-weight:400;color:#635bff;transform:scaleY(1.1);transform-origin:0 14.00px;">INV-000003</div>
<div class="t" style="left:497.70px;top:784.55px;font-size:12.6px;font-weight:400;color:#222;transform:scaleY(1.1);transform-origin:0 14.00px;">Stripe</div>
<div class="t" style="left:732.20px;top:784.55px;font-size:12.6px;font-weight:400;color:#222;transform:scaleY(1.1);transform-origin:0 14.00px;">ZRVVKHGZILQS2</div>
<div class="t" style="left:947.90px;top:784.55px;font-size:12.6px;font-weight:400;color:#222;transform:scaleY(1.1);transform-origin:0 14.00px;">Nishat Nuzhat</div>
<div class="t" style="left:1145.90px;top:784.55px;font-size:12.6px;font-weight:400;color:#222;transform:scaleY(1.1);transform-origin:0 14.00px;">286.5</div>
<div class="t" style="left:1272.60px;top:784.55px;font-size:12.6px;font-weight:400;color:#222;transform:scaleY(1.1);transform-origin:0 14.00px;">GBP</div>
<div class="t" style="left:1415.00px;top:784.55px;font-size:12.6px;font-weight:400;color:#222;transform:scaleY(1.1);transform-origin:0 14.00px;">03-08-2025</div>
<div class="r" style="left:1614px;top:787.65px;width:48px;height:15px;background:#00a65a;border-radius:3px"></div>
<div class="t" style="left:1614px;top:786.90px;width:48px;height:15px;line-height:15px;text-align:center;font-size:10px;color:#fff;transform:scaleY(0.92)">Success</div>
<div class="r" style="left:1749px;top:785.65px;width:24px;height:22px;background:#635bff;border-radius:3px"></div>
<svg class="r" style="left:1754.6px;top:791.85px;overflow:visible" width="14" height="9.6" viewBox="0 0 14 9.6"><path d="M7 1 C3.8 1 1.6 3.4 0.8 4.8 C1.6 6.2 3.8 8.6 7 8.6 C10.2 8.6 12.4 6.2 13.2 4.8 C12.4 3.4 10.2 1 7 1 Z" fill="none" stroke="#fff" stroke-width="1.3"/><circle cx="7" cy="4.6" r="2.9" fill="#fff"/><circle cx="5.6" cy="3.2" r="0.8" fill="#8f89ff"/></svg>
<div class="r" style="left:307px;top:816px;width:1543px;height:1px;background:#dcdcdc"></div>
<div class="r" style="left:304px;top:368px;width:1547px;height:445px;border:3px solid #ff0000;border-radius:2px;box-sizing:border-box"></div>
<div class="t" style="left:306.40px;top:842.60px;font-size:12.6px;font-weight:400;color:#333;transform:scaleY(1.1);transform-origin:0 14.00px;">Showing 1 to 12 of 12 entries</div>
<div class="t" style="left:1694.30px;top:842.90px;font-size:12.6px;font-weight:400;color:#666;transform:scaleY(1.1);transform-origin:0 14.00px;">Previous</div>
<div class="r" style="left:1759px;top:839px;width:36px;height:29px;background:#635bff;border-radius:5px"></div>
<div class="t" style="left:1773.50px;top:842.90px;font-size:12.6px;font-weight:400;color:#fff;transform:scaleY(1.1);transform-origin:0 14.00px;">1</div>
<div class="t" style="left:1810.00px;top:842.90px;font-size:12.6px;font-weight:400;color:#666;transform:scaleY(1.1);transform-origin:0 14.00px;">Next</div>
</body></html>
